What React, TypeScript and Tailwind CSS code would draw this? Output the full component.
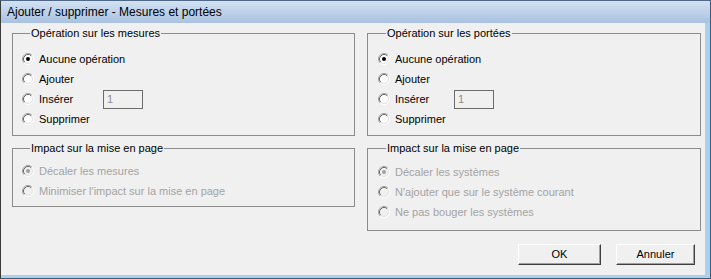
import React from "react";

type Opt = { label: string; checked?: boolean; edit?: boolean };

function Radio({ checked, disabled }: { checked?: boolean; disabled?: boolean }) {
  return (
    <svg width="12" height="12" viewBox="0 0 12 12" className="shrink-0">
      <circle cx="6" cy="6" r="4" fill={disabled ? "#f0f0f0" : "#ffffff"} />
      <path d="M2.11 9.89 A5.5 5.5 0 0 1 9.89 2.11" fill="none" stroke="#a0a0a0" />
      <path d="M9.89 2.11 A5.5 5.5 0 0 1 2.11 9.89" fill="none" stroke="#ffffff" />
      <path d="M2.82 9.18 A4.5 4.5 0 0 1 9.18 2.82" fill="none" stroke="#696969" />
      <path d="M9.18 2.82 A4.5 4.5 0 0 1 2.82 9.18" fill="none" stroke="#e3e3e3" />
      {checked && <circle cx="6" cy="6" r="2" fill={disabled ? "#a0a0a0" : "#000000"} />}
    </svg>
  );
}

function Group({
  title,
  options,
  disabled,
  width,
  labelWidth,
  padClass,
  padTop,
  padBottom,
}: {
  title: string;
  options: Opt[];
  disabled?: boolean;
  width: string;
  labelWidth: string;
  padClass: string;
  padTop: string;
  padBottom: string;
}) {
  return (
    <fieldset className={`${width} border border-[#8c8c8c] ${padClass} ${padBottom}`}>
      <legend className="ml-[8px] px-[1px] text-[11px] leading-[13px] text-black">{title}</legend>
      <div className={`flex flex-col ${padTop}`}>
        {options.map((o) => (
          <div key={o.label} className="flex h-[20px] items-center">
            <Radio checked={o.checked} disabled={disabled} />
            <span
              className={`ml-[5px] text-[11px] leading-[13px] ${o.edit ? labelWidth : ""} ${
                disabled ? "text-[#a3a3a3]" : "text-black"
              }`}
            >
              {o.label}
            </span>
            {o.edit && (
              <div className="flex h-[19px] w-[40px] items-center border border-[#6b6b6b] bg-[#f0f0f0] pl-[3px] text-[11px] text-[#8c8c8c]">
                1
              </div>
            )}
          </div>
        ))}
      </div>
    </fieldset>
  );
}

function Button({ label, width }: { label: string; width: string }) {
  return (
    <button
      className={`${width} flex h-[21px] items-center justify-center border border-t-white border-l-white border-r-[#404040] border-b-[#404040] bg-[#f0f0f0] text-[11px] text-black shadow-[inset_-1px_-1px_0_#a0a0a0]`}
    >
      {label}
    </button>
  );
}

export default function App() {
  const ops: Opt[] = [
    { label: "Aucune opération", checked: true },
    { label: "Ajouter" },
    { label: "Insérer", edit: true },
    { label: "Supprimer" },
  ];

  return (
    <div
      className="flex h-[279px] w-[711px] flex-col overflow-hidden border border-l-[#3c3c3c] border-t-[#4f6a88] border-r-[#3d5a78] border-b-[#3d5a78] bg-[#a9d1ee]"
      style={{ fontFamily: '"Liberation Sans", Arial, sans-serif' }}
    >
      {/* Title bar */}
      <div className="flex h-[22px] shrink-0 items-center bg-gradient-to-b from-[#d3e1f2] to-[#a9c2e1] pl-[6px] text-[12px] text-black">
        Ajouter / supprimer - Mesures et portées
      </div>

      {/* Body */}
      <div className="mr-[5px] mb-[3px] flex flex-1 flex-col bg-[#f0f0f0] pt-[4px] pl-[11px]">
        <div className="flex items-start gap-[12px]">
          {/* Left column */}
          <div className="flex flex-col gap-[6px]">
            <Group
              title="Opération sur les mesures"
              options={ops}
              width="w-[343px]"
              labelWidth="w-[64px]"
              padClass="pl-[9px]"
              padTop="pt-[9px]"
              padBottom="pb-[6px]"
            />
            <Group
              title="Impact sur la mise en page"
              disabled
              options={[
                { label: "Décaler les mesures", checked: true },
                { label: "Minimiser l'impact sur la mise en page" },
              ]}
              width="w-[343px]"
              labelWidth="w-[64px]"
              padClass="pl-[9px]"
              padTop="pt-[6px]"
              padBottom="pb-[5px]"
            />
          </div>

          {/* Right column */}
          <div className="flex flex-col gap-[6px]">
            <Group
              title="Opération sur les portées"
              options={ops}
              width="w-[334px]"
              labelWidth="w-[59px]"
              padClass="pl-[10px]"
              padTop="pt-[9px]"
              padBottom="pb-[6px]"
            />
            <Group
              title="Impact sur la mise en page"
              disabled
              options={[
                { label: "Décaler les systèmes", checked: true },
                { label: "N'ajouter que sur le système courant" },
                { label: "Ne pas bouger les systèmes" },
              ]}
              width="w-[334px]"
              labelWidth="w-[59px]"
              padClass="pl-[10px]"
              padTop="pt-[7px]"
              padBottom="pb-[8px]"
            />
          </div>
        </div>

        {/* Buttons */}
        <div className="mt-[13px] flex justify-end gap-[15px] pr-[10px]">
          <Button label="OK" width="w-[83px]" />
          <Button label="Annuler" width="w-[79px]" />
        </div>
      </div>
    </div>
  );
}
